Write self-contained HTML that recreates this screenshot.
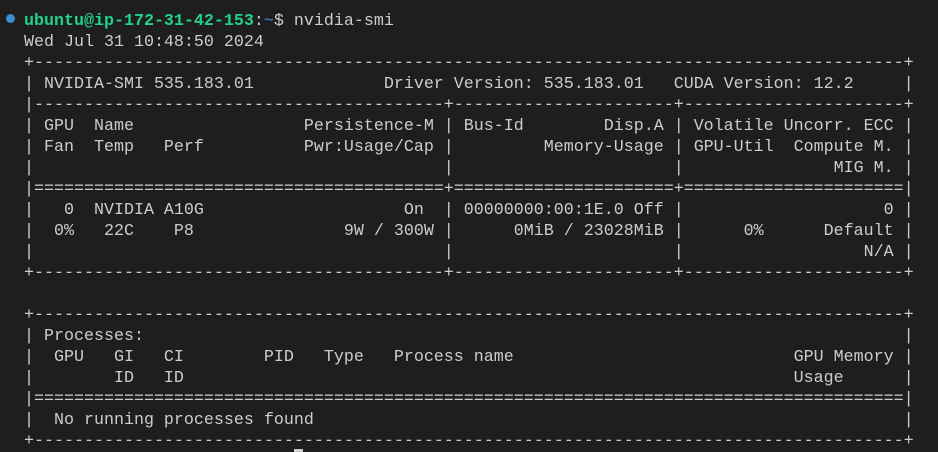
<!DOCTYPE html>
<html><head><meta charset="utf-8"><style>
html,body{margin:0;padding:0;background:#1e1e1e;width:938px;height:452px;overflow:hidden}
pre{position:absolute;left:24px;top:11px;margin:0;font-family:"Liberation Mono",monospace;font-size:16.67px;line-height:21px;color:#cccccc;white-space:pre}
.g{color:#23d18b;font-weight:bold}
.b{color:#3b8eea}
.dot{position:absolute;left:6px;top:14px;width:9px;height:9px;border-radius:50%;background:#3b8ed0}
.cur{position:absolute;left:294px;top:449px;width:9px;height:3px;background:#ccc}
</style></head><body>
<div class="dot"></div>
<pre><span class="g">ubuntu@ip-172-31-42-153</span>:<span class="b">~</span>$ nvidia-smi
Wed Jul 31 10:48:50 2024       
+---------------------------------------------------------------------------------------+
| NVIDIA-SMI 535.183.01             Driver Version: 535.183.01   CUDA Version: 12.2     |
|-----------------------------------------+----------------------+----------------------+
| GPU  Name                 Persistence-M | Bus-Id        Disp.A | Volatile Uncorr. ECC |
| Fan  Temp   Perf          Pwr:Usage/Cap |         Memory-Usage | GPU-Util  Compute M. |
|                                         |                      |               MIG M. |
|=========================================+======================+======================|
|   0  NVIDIA A10G                    On  | 00000000:00:1E.0 Off |                    0 |
|  0%   22C    P8               9W / 300W |      0MiB / 23028MiB |      0%      Default |
|                                         |                      |                  N/A |
+-----------------------------------------+----------------------+----------------------+
                                                                                         
+---------------------------------------------------------------------------------------+
| Processes:                                                                            |
|  GPU   GI   CI        PID   Type   Process name                            GPU Memory |
|        ID   ID                                                             Usage      |
|=======================================================================================|
|  No running processes found                                                           |
+---------------------------------------------------------------------------------------+</pre>
<div class="cur"></div>
</body></html>
